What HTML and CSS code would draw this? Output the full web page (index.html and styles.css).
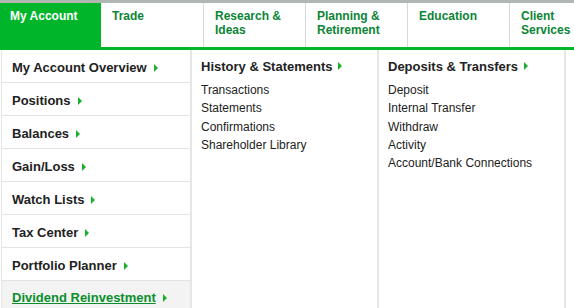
FILE: index.html
```html
<!DOCTYPE html>
<html>
<head>
<meta charset="utf-8">
<link rel="stylesheet" href="styles.css">
</head>
<body>
<div class="topbar"></div>
<nav class="nav">
  <a class="tab active">My Account</a>
  <a class="tab t2">Trade</a>
  <a class="tab">Research &amp;<br>Ideas</a>
  <a class="tab">Planning &amp;<br>Retirement</a>
  <a class="tab">Education</a>
  <a class="tab last">Client<br>Services</a>
</nav>
<div class="menu">
  <ul class="side">
    <li class="row"><span>My Account Overview</span><i class="arr"></i></li>
    <li class="row"><span>Positions</span><i class="arr"></i></li>
    <li class="row"><span>Balances</span><i class="arr"></i></li>
    <li class="row"><span>Gain/Loss</span><i class="arr"></i></li>
    <li class="row"><span>Watch Lists</span><i class="arr"></i></li>
    <li class="row"><span>Tax Center</span><i class="arr"></i></li>
    <li class="row"><span>Portfolio Planner</span><i class="arr"></i></li>
    <li class="row current"><span>Dividend Reinvestment</span><i class="arr"></i></li>
  </ul>
  <div class="col">
    <div class="head">History &amp; Statements<i class="arr"></i></div>
    <a class="link">Transactions</a>
    <a class="link">Statements</a>
    <a class="link">Confirmations</a>
    <a class="link">Shareholder Library</a>
  </div>
  <div class="col">
    <div class="head">Deposits &amp; Transfers<i class="arr"></i></div>
    <a class="link">Deposit</a>
    <a class="link">Internal Transfer</a>
    <a class="link">Withdraw</a>
    <a class="link">Activity</a>
    <a class="link">Account/Bank Connections</a>
  </div>
</div>
</body>
</html>
```
FILE: styles.css
```css
html, body {
  margin: 0;
  padding: 0;
  background: #fff;
  height: 308px;
  overflow: hidden;
  font-family: "Liberation Sans", Arial, sans-serif;
}
.topbar {
  height: 3px;
  background: #b1b6b2;
}
.nav {
  display: flex;
  height: 44px;
  border-bottom: 3px solid #00b52a;
}
.tab {
  box-sizing: border-box;
  width: 102px;
  padding: 6px 0 0 11px;
  font-size: 12px;
  font-weight: bold;
  line-height: 14px;
  color: #0b8535;
  border-right: 1px solid #d9d9d9;
}
.tab.active {
  width: 101px;
  padding-left: 10px;
  background: #00b52a;
  color: #fff;
  border-right: none;
}
.tab.t2 {
  width: 103px;
}
.tab.last {
  flex: 1;
  border-right: none;
}
.menu {
  display: flex;
  height: 258px;
}
.side {
  list-style: none;
  margin: 0 0 0 1px;
  padding: 0;
  width: 188px;
  border-left: 1px solid #e6e6e6;
  border-right: 2px solid #e6e6e6;
}
.row {
  display: flex;
  align-items: center;
  box-sizing: border-box;
  height: 33px;
  padding: 3px 0 0 10px;
  border-bottom: 1px solid #e3e3e3;
  font-size: 13px;
  font-weight: bold;
  color: #222;
}
.row.current {
  background: #f3f3f3;
  color: #0a8f2c;
  border-bottom: none;
  height: 30px;
}
.row.current span {
  text-decoration: underline;
}
.arr {
  display: inline-block;
  width: 0;
  height: 0;
  margin-left: 7px;
  border-top: 4px solid transparent;
  border-bottom: 4px solid transparent;
  border-left: 4px solid #18b02c;
}
.col {
  display: flex;
  flex-direction: column;
  width: 187px;
  box-sizing: border-box;
  padding: 9px 0 0 9px;
  border-right: 2px solid #e6e6e6;
}
.head {
  display: flex;
  align-items: center;
  font-size: 13px;
  font-weight: bold;
  color: #222;
  height: 14px;
  margin-bottom: 8px;
}
.head .arr {
  margin-left: 6px;
}
.link {
  font-size: 12px;
  line-height: 18.3px;
  color: #222;
}
```
